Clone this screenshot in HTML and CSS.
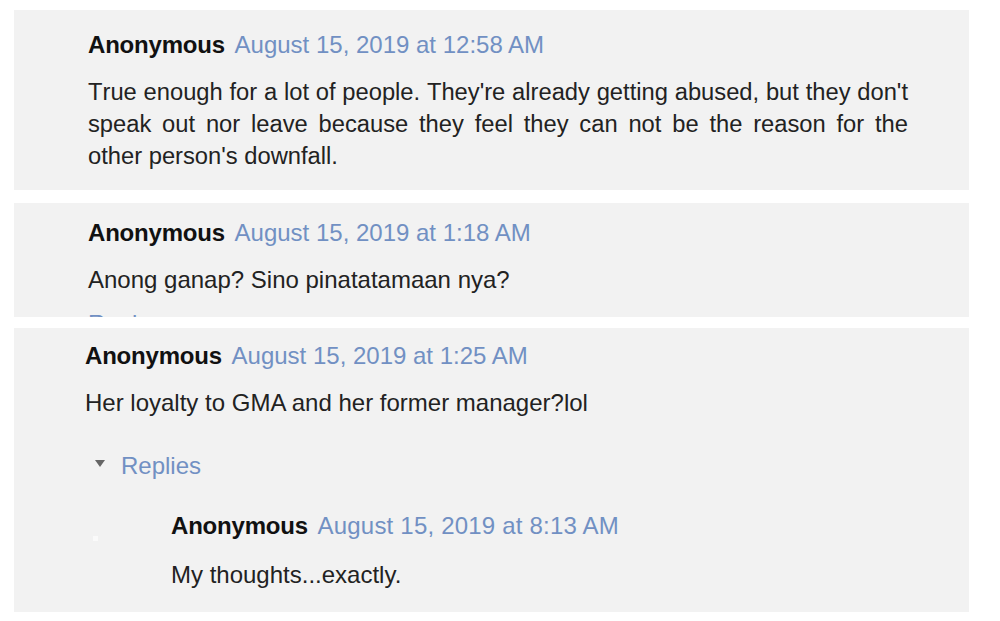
FILE: index.html
```html
<!DOCTYPE html>
<html>
<head>
<meta charset="utf-8">
<link rel="stylesheet" href="styles.css">
</head>
<body>
<div class="thread">
  <div class="comment c1">
    <div class="head"><span class="name">Anonymous</span> <a class="date">August 15, 2019 at 12:58 AM</a></div>
    <p class="text justify">True enough for a lot of people. They're already getting abused, but they don't speak out nor leave because they feel they can not be the reason for the other person's downfall.</p>
  </div>
  <div class="comment c2">
    <div class="head"><span class="name">Anonymous</span> <a class="date">August 15, 2019 at 1:18 AM</a></div>
    <p class="text">Anong ganap? Sino pinatatamaan nya?</p>
    <a class="reply">Reply</a>
  </div>
  <div class="comment c3">
    <div class="head"><span class="name">Anonymous</span> <a class="date">August 15, 2019 at 1:25 AM</a></div>
    <p class="text">Her loyalty to GMA and her former manager?lol</p>
    <div class="replies"><span class="tri"></span><a class="date">Replies</a></div>
    <div class="sub">
      <span class="dot"></span>
      <div class="head"><span class="name">Anonymous</span> <a class="date">August 15, 2019 at 8:13 AM</a></div>
      <p class="text">My thoughts...exactly.</p>
    </div>
  </div>
</div>
</body>
</html>
```
FILE: styles.css
```css
html, body {
  margin: 0;
  padding: 0;
  background: #ffffff;
}
body {
  font-family: "Liberation Sans", Arial, sans-serif;
  font-size: 24px;
  color: #222222;
}
.thread {
  padding: 10px 0 0 14px;
  width: 955px;
  display: flex;
  flex-direction: column;
}
.comment {
  background: #f2f2f2;
  box-sizing: border-box;
  overflow: hidden;
}
.head {
  line-height: 32px;
  white-space: nowrap;
}
.name {
  font-weight: bold;
  color: #111111;
  letter-spacing: -0.2px;
}
.date {
  color: #7190c3;
  margin-left: 3px;
}
.text {
  margin: 15px 0 0 0;
  line-height: 32px;
}
.justify {
  text-align: justify;
  font-size: 23.74px;
  font-kerning: none;
}
.c1 {
  height: 180px;
  padding: 19px 61px 0 74px;
}
.c2 {
  margin-top: 13px;
  height: 114px;
  padding: 14px 61px 0 74px;
}
.reply {
  display: block;
  margin-top: 12px;
  line-height: 32px;
  color: #7190c3;
}
.c3 {
  margin-top: 11px;
  height: 284px;
  padding: 12px 61px 0 71px;
}
.replies {
  margin-top: 31px;
  display: flex;
  align-items: center;
  line-height: 32px;
  padding-left: 10px;
}
.replies .date {
  margin-left: 16px;
}
.tri {
  width: 0;
  height: 0;
  border-left: 5.5px solid transparent;
  border-right: 5.5px solid transparent;
  border-top: 7px solid #666666;
  margin-top: -6px;
}
.sub {
  margin-top: 28px;
  padding-left: 86px;
  position: relative;
}
.sub .date {
  letter-spacing: 0.2px;
}
.sub .text {
  margin-top: 17px;
}
.dot {
  position: absolute;
  left: 8px;
  top: 26px;
  width: 5px;
  height: 5px;
  background: #fafafa;
}
```
